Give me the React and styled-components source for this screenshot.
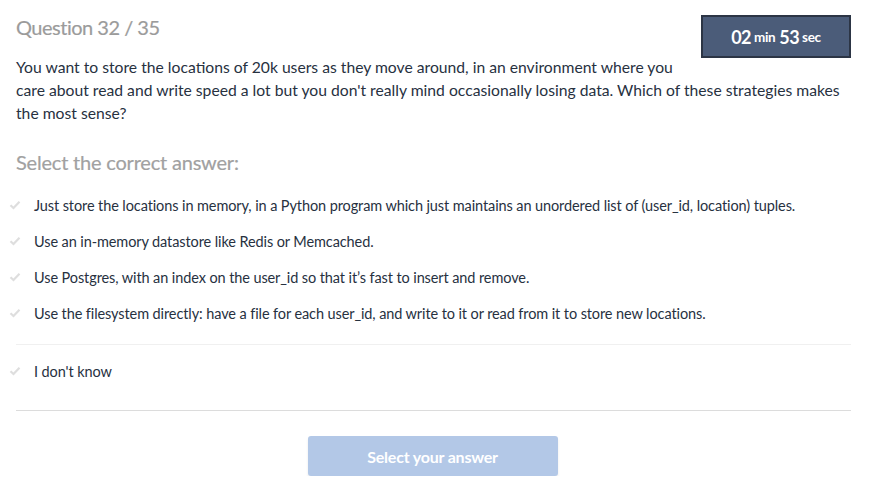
import React, { useState } from "react";
import styled, { createGlobalStyle } from "styled-components";

const GlobalStyle = createGlobalStyle`
  body {
    margin: 0;
    background: #fff;
    font-family: Lato, "Open Sans", sans-serif;
  }
`;

const Page = styled.div`
  padding: 14px 18px 0 16px;
`;

const Timer = styled.div`
  float: right;
  width: 150px;
  height: 43px;
  box-sizing: border-box;
  margin: 1px 0 0 26px;
  background: #4b5c79;
  border: 2px solid #2c3545;
  color: #fff;
  font-weight: 700;
  display: flex;
  align-items: center;
  justify-content: center;
  font-size: 18px;
  letter-spacing: -0.6px;
  small {
    font-size: 13.5px;
    margin: 1px 4px 0 3px;
    letter-spacing: -0.3px;
  }
  small:last-child {
    margin-right: 0;
  }
`;

const Title = styled.h2`
  margin: 0;
  font-size: 20px;
  font-weight: 400;
  color: #9b9b9b;
  line-height: 26px;
  letter-spacing: -0.5px;
  -webkit-text-stroke: 0.2px #9b9b9b;
`;

const Question = styled.p`
  margin: 16px 0 0;
  font-size: 15.7px;
  line-height: 23px;
  color: #27313f;
`;

const SubTitle = styled.h3`
  clear: both;
  margin: 24px 0 0;
  font-size: 20px;
  font-weight: 400;
  color: #a1a1a1;
  line-height: 26px;
  letter-spacing: -0.2px;
  -webkit-text-stroke: 0.2px #a1a1a1;
`;

const Options = styled.div`
  margin-top: 12px;
`;

const Option = styled.div`
  display: flex;
  align-items: center;
  height: 36px;
  margin-left: -8px;
  font-size: 14.5px;
  color: #27313f;
  cursor: pointer;
  letter-spacing: -0.1px;
`;

const Check = styled.span`
  width: 14px;
  margin-right: 12px;
  display: flex;
  justify-content: center;
  color: ${(p) => (p.active ? "#4b8ad6" : "#dedede")};
`;

const Divider = styled.hr`
  border: 0;
  border-top: 1px solid ${(p) => p.color};
  margin: ${(p) => p.m};
`;

const Footer = styled.div`
  display: flex;
  justify-content: center;
  padding-top: 25px;
`;

const SubmitButton = styled.button`
  width: 250px;
  height: 40px;
  border: 0;
  border-radius: 3px;
  background: ${(p) => (p.ready ? "#4b8ad6" : "#b3c8e7")};
  color: #fff;
  font-family: Lato, sans-serif;
  font-weight: 700;
  font-size: 16px;
  letter-spacing: -0.2px;
  box-shadow: 0 2px 3px rgba(0, 0, 0, 0.08);
  margin-left: -2px;
`;

function CheckIcon() {
  return (
    <svg width="12" height="10" viewBox="0 0 12 10">
      <path d="M1.5 5.2 L4.5 8 L10.5 1.8" fill="none" stroke="currentColor" strokeWidth="2.2" />
    </svg>
  );
}

const answers = [
  "Just store the locations in memory, in a Python program which just maintains an unordered list of (user_id, location) tuples.",
  "Use an in-memory datastore like Redis or Memcached.",
  "Use Postgres, with an index on the user_id so that it\u2019s fast to insert and remove.",
  "Use the filesystem directly: have a file for each user_id, and write to it or read from it to store new locations.",
];

export default function App() {
  let [picked, setPicked] = useState(null);

  return (
    <>
      <GlobalStyle />
      <Page>
        <Timer>
          02<small>min</small>53<small>sec</small>
        </Timer>
        <Title>Question 32 / 35</Title>
        <Question>
          You want to store the locations of 20k users as they move around, in an environment where you
          care about read and write speed a lot but you don't really mind occasionally losing data. Which of
          these strategies makes the most sense?
        </Question>
        <SubTitle>Select the correct answer:</SubTitle>
        <Options>
          {answers.map((a, i) => (
            <Option key={i} onClick={() => setPicked(i)}>
              <Check active={picked === i}><CheckIcon /></Check>
              {a}
            </Option>
          ))}
        </Options>
        <Divider color="#f0f0f0" m="13px 0 8px" />
        <Option onClick={() => setPicked(-1)}>
          <Check active={picked === -1}><CheckIcon /></Check>
          I don't know
        </Option>
        <Divider color="#dcdcdc" m="21px 0 0" />
        <Footer>
          <SubmitButton ready={picked !== null}>Select your answer</SubmitButton>
        </Footer>
      </Page>
    </>
  );
}
